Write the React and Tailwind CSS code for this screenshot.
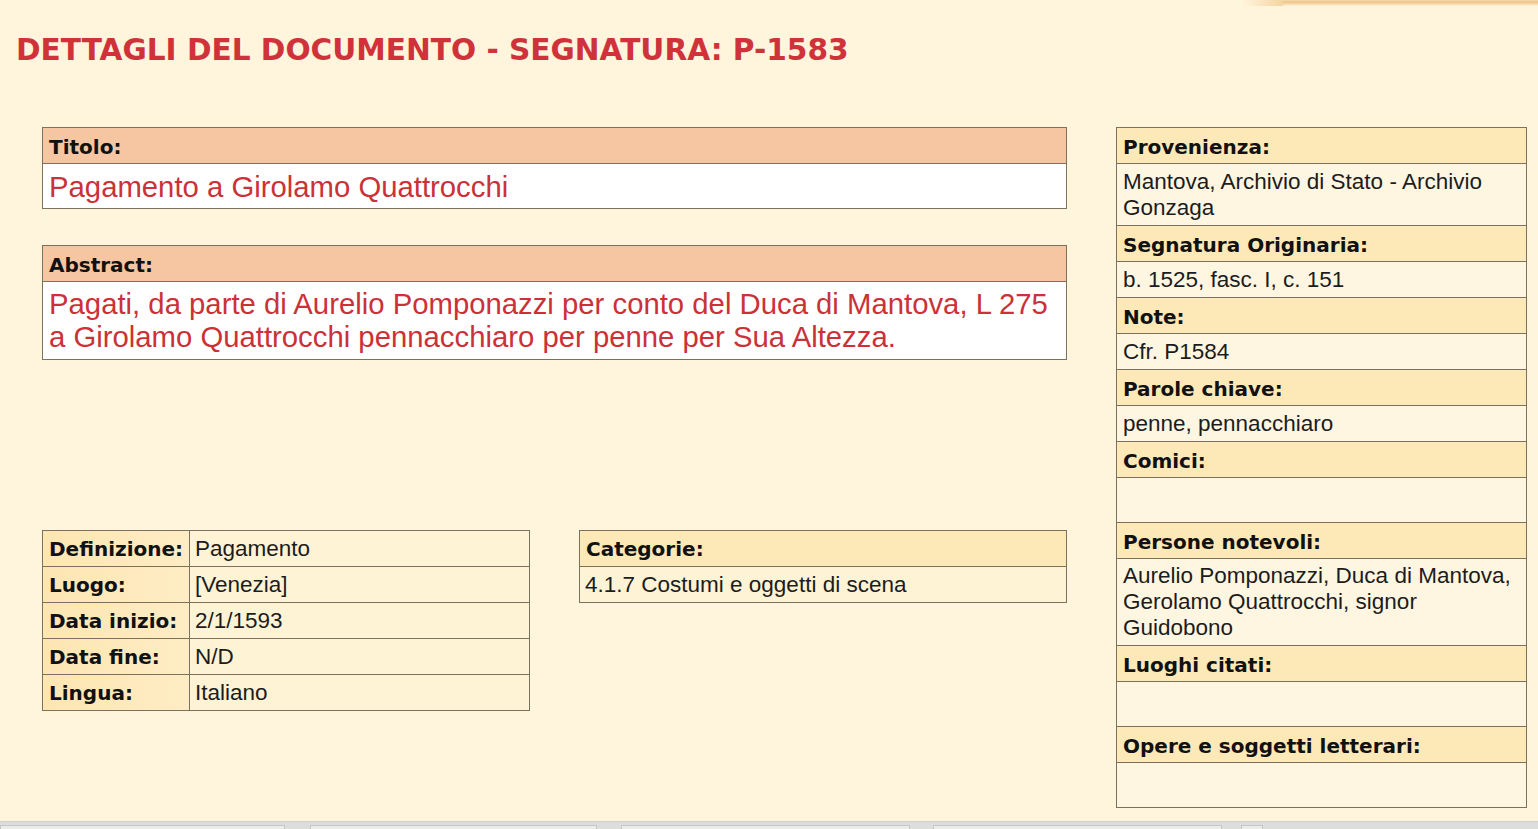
import React from "react";

const bd = "border-[#7a715f]";
const labelFont = "font-['DejaVu_Sans',Verdana,sans-serif] font-bold text-[20px] leading-[23px] text-[#111]";
const valueFont = "font-['Liberation_Sans',Arial,sans-serif] text-[22.5px] leading-[26px] text-[#1c1c1c]";
const redFont = "font-['Liberation_Sans',Arial,sans-serif] text-[29.3px] leading-[33px] text-[#cc3138]";

const rightRows = [
  { label: "Provenienza:", value: "Mantova, Archivio di Stato - Archivio Gonzaga", lh: "h-[35px]", vh: "h-[62px]" },
  { label: "Segnatura Originaria:", value: "b. 1525, fasc. I, c. 151", lh: "h-[36px]", vh: "h-[36px]" },
  { label: "Note:", value: "Cfr. P1584", lh: "h-[36px]", vh: "h-[36px]" },
  { label: "Parole chiave:", value: "penne, pennacchiaro", lh: "h-[36px]", vh: "h-[36px]" },
  { label: "Comici:", value: "", lh: "h-[36px]", vh: "h-[45px]" },
  { label: "Persone notevoli:", value: "Aurelio Pomponazzi, Duca di Mantova, Gerolamo Quattrocchi, signor Guidobono", lh: "h-[36px]", vh: "h-[87px]" },
  { label: "Luoghi citati:", value: "", lh: "h-[36px]", vh: "h-[45px]" },
  { label: "Opere e soggetti letterari:", value: "", lh: "h-[36px]", vh: "h-[45px]" },
];

const details = [
  ["Definizione:", "Pagamento"],
  ["Luogo:", "[Venezia]"],
  ["Data inizio:", "2/1/1593"],
  ["Data fine:", "N/D"],
  ["Lingua:", "Italiano"],
];

function RightColumn() {
  return (
    <div className={`w-[411px] border ${bd} flex flex-col`}>
      {rightRows.map((r, i) => (
        <React.Fragment key={r.label}>
          <div
            className={`${r.lh} ${i === 0 ? "" : `border-t ${bd}`} bg-[#fde8b7] px-[6px] pt-[3px] flex items-center ${labelFont}`}
          >
            {r.label}
          </div>
          <div className={`${r.vh} border-t ${bd} bg-[#fff6e2] px-[6px] flex items-center ${valueFont}`}>
            <span>{r.value}</span>
          </div>
        </React.Fragment>
      ))}
    </div>
  );
}

function DetailsTable() {
  return (
    <div className={`w-[488px] border ${bd} flex flex-col`}>
      {details.map(([l, v], i) => (
        <div
          key={l}
          className={`grid grid-cols-[147px_1fr] ${i === 0 ? "h-[35px]" : `h-[36px] border-t ${bd}`}`}
        >
          <div className={`border-r ${bd} bg-gradient-to-r from-[#fde6b2] to-[#feecc4] px-[6px] pt-[2px] flex items-center ${labelFont}`}>
            {l}
          </div>
          <div className={`bg-[#fff3d6] px-[5px] pt-[1px] flex items-center ${valueFont}`}>{v}</div>
        </div>
      ))}
    </div>
  );
}

function Footer() {
  const tab = "h-[4px] bg-[#ebebeb] border-t border-l border-r border-[#c6c6c6]";
  return (
    <div className="h-[8px] bg-[#dddddd] border-t border-[#cfcfcf] flex items-end">
      <div className={`${tab} w-[285px]`} />
      <div className={`${tab} w-[287px] ml-[25px]`} />
      <div className={`${tab} w-[289px] ml-[24px]`} />
      <div className={`${tab} w-[289px] ml-[23px]`} />
      <div className={`${tab} w-[22px] ml-[19px]`} />
    </div>
  );
}

export default function App() {
  return (
    <div className="h-screen bg-[#fff4dc] flex flex-col overflow-hidden">
      <div className="flex-1">
        <div className="flex justify-end h-[6px]">
          <div className="w-[40px] h-[6px] bg-gradient-to-r from-[#fff4dc] to-[#f4d4a2]" />
          <div className="w-[255px] h-[6px] bg-[linear-gradient(to_bottom,#f6dcb0_0px,#efc283_2px,#f3cf9c_3px,#f9e5c4_5px,#fff4dc_6px)]" />
        </div>
        <h1 className="mt-[27px] pl-[16px] font-['DejaVu_Sans',Verdana,sans-serif] font-bold text-[29.6px] leading-[34px] text-[#d0323a]">
          DETTAGLI DEL DOCUMENTO - SEGNATURA: P-1583
        </h1>
        <div className="mt-[60px] pl-[42px] flex items-start gap-[49px]">
          <div className="w-[1025px] flex flex-col">
            <div className={`border ${bd}`}>
              <div className={`h-[35px] bg-[#f6c6a3] px-[6px] pt-[3px] flex items-center ${labelFont}`}>Titolo:</div>
              <div className={`h-[45px] border-t ${bd} bg-white px-[6px] pt-[6px] ${redFont}`}>
                Pagamento a Girolamo Quattrocchi
              </div>
            </div>
            <div className={`mt-[36px] border ${bd}`}>
              <div className={`h-[35px] bg-[#f6c6a3] px-[6px] pt-[3px] flex items-center ${labelFont}`}>Abstract:</div>
              <div className={`h-[78px] border-t ${bd} bg-white px-[6px] pt-[5px] ${redFont}`}>
                Pagati, da parte di Aurelio Pomponazzi per conto del Duca di Mantova, L 275 a Girolamo Quattrocchi pennacchiaro per penne per Sua Altezza.
              </div>
            </div>
            <div className="mt-[170px] flex items-start gap-[49px]">
              <DetailsTable />
              <div className={`w-[488px] border ${bd}`}>
                <div className={`h-[35px] bg-[#fde8b7] px-[6px] pt-[2px] flex items-center ${labelFont}`}>Categorie:</div>
                <div className={`h-[36px] border-t ${bd} bg-[#fff3d6] px-[5px] pt-[1px] flex items-center ${valueFont}`}>
                  4.1.7 Costumi e oggetti di scena
                </div>
              </div>
            </div>
          </div>
          <RightColumn />
        </div>
      </div>
      <Footer />
    </div>
  );
}
